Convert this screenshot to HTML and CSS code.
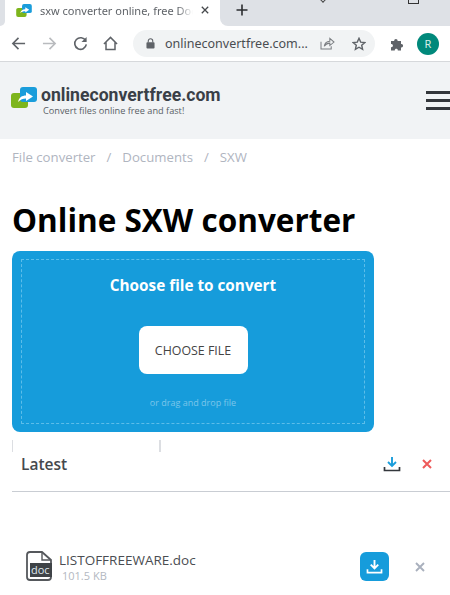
FILE: index.html
```html
<!DOCTYPE html>
<html lang="en">
<head>
    <meta charset="UTF-8">
    <meta name="viewport" content="width=device-width, initial-scale=1.0">
    <title>sxw converter online, free Documents</title>
    <link rel="stylesheet" href="styles.css">
</head>
<body>
    <!-- Browser chrome -->
    <div class="tabbar">
        <div class="tab-edge"></div>
        <div class="tab">
            <svg class="tab-logo" viewBox="0 0 24 20" xmlns="http://www.w3.org/2000/svg">
                <rect x="0" y="6" width="16" height="14" rx="3" fill="#7db51c"/>
                <rect x="9" y="0" width="15" height="14" rx="3" fill="#1a9ddb"/>
                <path d="M6 14 C7 10 10 8 14 8 V5 L20 9 L14 13 V11 C11 11 8 12 6 14Z" fill="#fff"/>
            </svg>
            <span class="tab-title">sxw converter online, free Doc</span>
            <svg class="tab-close" viewBox="0 0 10 10" xmlns="http://www.w3.org/2000/svg">
                <path d="M1 1 L9 9 M9 1 L1 9" stroke="#45484c" stroke-width="1.6"/>
            </svg>
        </div>
        <div class="tab-rest">
            <svg class="tab-new" viewBox="0 0 12 12" xmlns="http://www.w3.org/2000/svg">
                <path d="M6 0.5 V11.5 M0.5 6 H11.5" stroke="#2b2d30" stroke-width="1.6"/>
            </svg>
            <span class="win-chevron"></span>
            <span class="win-box"></span>
        </div>
    </div>

    <div class="toolbar">
        <svg class="tool-icon" viewBox="0 0 16 16" xmlns="http://www.w3.org/2000/svg">
            <path d="M15 8 H2 M8 2 L2 8 L8 14" fill="none" stroke="#5f6368" stroke-width="1.7"/>
        </svg>
        <svg class="tool-icon" viewBox="0 0 16 16" xmlns="http://www.w3.org/2000/svg">
            <path d="M1 8 H14 M8 2 L14 8 L8 14" fill="none" stroke="#b9bbbe" stroke-width="1.7"/>
        </svg>
        <svg class="tool-icon" viewBox="0 0 16 16" xmlns="http://www.w3.org/2000/svg">
            <path d="M13.5 5 A6.2 6.2 0 1 0 14.2 9" fill="none" stroke="#5f6368" stroke-width="1.7"/>
            <path d="M14.5 1 V6.5 H9Z" fill="#5f6368"/>
        </svg>
        <svg class="tool-icon" viewBox="0 0 16 16" xmlns="http://www.w3.org/2000/svg">
            <path d="M1 8.5 L8 1.5 L15 8.5 M3.2 7 V14.5 H12.8 V7" fill="none" stroke="#5f6368" stroke-width="1.6"/>
        </svg>
        <div class="address">
            <svg class="lock" viewBox="0 0 10 12" xmlns="http://www.w3.org/2000/svg">
                <rect x="0.5" y="4.5" width="9" height="7" rx="1" fill="#5f6368"/>
                <path d="M2.5 5 V3.2 A2.5 2.5 0 0 1 7.5 3.2 V5" fill="none" stroke="#5f6368" stroke-width="1.2"/>
            </svg>
            <span class="url">onlineconvertfree.com...</span>
            <svg class="share" viewBox="0 0 16 14" xmlns="http://www.w3.org/2000/svg">
                <path d="M1 5 V13 H12 V10 M4.5 10 C5 6.5 7.5 4.8 10.5 4.6 V1.5 L15 5.5 L10.5 9.2 V6.6 C8 6.6 6 7.8 4.5 10Z" fill="none" stroke="#7b7e82" stroke-width="1.1"/>
            </svg>
            <svg class="star" viewBox="0 0 14 14" xmlns="http://www.w3.org/2000/svg">
                <path d="M7 1.3 L8.7 5.1 L12.8 5.5 L9.7 8.2 L10.6 12.3 L7 10.2 L3.4 12.3 L4.3 8.2 L1.2 5.5 L5.3 5.1Z" fill="none" stroke="#5f6368" stroke-width="1.4"/>
            </svg>
        </div>
        <svg class="puzzle" viewBox="0 0 14 14" xmlns="http://www.w3.org/2000/svg">
            <path d="M1 4 H4.2 C3.8 1.2 8 1.2 7.6 4 H11 V7 C13.8 6.6 13.8 10.8 11 10.4 V13.5 H7.8 C8.2 11 4.4 11 4.8 13.5 H1 V10.2 C3.6 10.6 3.6 6.6 1 7Z" fill="#5f6368"/>
        </svg>
        <div class="avatar">R</div>
    </div>

    <!-- Site header -->
    <header class="site-header">
        <svg class="logo" viewBox="0 0 26 21" xmlns="http://www.w3.org/2000/svg">
            <rect x="0" y="6" width="17" height="15" rx="3" fill="#7db51c"/>
            <rect x="9" y="0" width="17" height="15" rx="3" fill="#1a9ddb"/>
            <path d="M7 15 C8 10.5 11 8.5 15 8.5 V5 L22 9.5 L15 14 V11.5 C12 11.5 9.5 12.5 7 15Z" fill="#fff"/>
        </svg>
        <div class="brand">
            <div class="brand-name">onlineconvertfree.com</div>
            <div class="brand-tag">Convert files online free and fast!</div>
        </div>
        <div class="burger">
            <span></span>
            <span></span>
            <span></span>
        </div>
    </header>

    <nav class="crumbs">
        <span>File converter</span>
        <span>/</span>
        <span>Documents</span>
        <span>/</span>
        <span>SXW</span>
    </nav>

    <h1 class="page-title">Online SXW converter</h1>

    <div class="upload">
        <div class="upload-inner">
            <p class="upload-title">Choose file to convert</p>
            <button class="choose-btn">CHOOSE FILE</button>
            <p class="upload-hint">or drag and drop file</p>
        </div>
    </div>

    <div class="ticks"></div>

    <div class="latest-head">
        <span class="latest-title">Latest</span>
        <svg class="latest-dl" viewBox="0 0 18 16" xmlns="http://www.w3.org/2000/svg">
            <path d="M9 1 V9 M5 6 L9 10 L13 6" fill="none" stroke="#1a9ddb" stroke-width="1.9"/>
            <path d="M1.5 11 V14.5 H16.5 V11" fill="none" stroke="#33373c" stroke-width="1.7"/>
        </svg>
        <svg class="latest-x" viewBox="0 0 10 10" xmlns="http://www.w3.org/2000/svg">
            <path d="M1 1 L9 9 M9 1 L1 9" stroke="#ee5a5a" stroke-width="2"/>
        </svg>
    </div>

    <div class="file-row">
        <div class="file-icon">
            <svg viewBox="0 0 26 30" xmlns="http://www.w3.org/2000/svg">
                <path d="M1 4 Q1 1 4 1 H16 L25 9 V26 Q25 29 22 29 H4 Q1 29 1 26Z" fill="#fff" stroke="#55585c" stroke-width="1.8"/>
                <path d="M16 1 V9 H25" fill="none" stroke="#55585c" stroke-width="1.4"/>
                <rect x="4" y="12" width="22" height="14" fill="#3f4347"/>
            </svg>
            <span class="file-ext">doc</span>
        </div>
        <div class="file-info">
            <div class="file-name">LISTOFFREEWARE.doc</div>
            <div class="file-size">101.5 KB</div>
        </div>
        <button class="file-dl">
            <svg viewBox="0 0 18 16" xmlns="http://www.w3.org/2000/svg">
                <path d="M9 1 V9 M5 6 L9 10 L13 6" fill="none" stroke="#fff" stroke-width="2"/>
                <path d="M1.5 11 V14.5 H16.5 V11" fill="none" stroke="#fff" stroke-width="1.8"/>
            </svg>
        </button>
        <svg class="file-x" viewBox="0 0 10 10" xmlns="http://www.w3.org/2000/svg">
            <path d="M1 1 L9 9 M9 1 L1 9" stroke="#a9b0bd" stroke-width="1.9"/>
        </svg>
    </div>
</body>
</html>
```

FILE: styles.css
```css
html, body {
    height: 595px;
    overflow: hidden;
}

body {
    background-color: #ffffff;
    font-family: 'Open Sans', sans-serif;
    margin: 0;
    padding: 0;
}

/* Browser chrome */
.tabbar {
    height: 26px;
    background-color: #ffffff;
    display: flex;
}

.tab-edge {
    width: 5px;
    background-color: #dee1e6;
    border-radius: 0 0 7px 0;
}

.tab {
    width: 215px;
    background-color: #ffffff;
    display: flex;
    align-items: center;
    padding: 0 0 6px 11px;
    box-sizing: border-box;
}

.tab-logo {
    width: 16px;
    height: 13px;
    margin-right: 8px;
}

.tab-title {
    width: 153px;
    font-family: 'Noto Sans', sans-serif;
    font-size: 11px;
    color: #5f6368;
    white-space: nowrap;
    -webkit-mask-image: linear-gradient(to right, #000 90%, transparent);
    mask-image: linear-gradient(to right, #000 90%, transparent);
}

.tab-close {
    width: 8px;
    height: 8px;
    margin-left: 8px;
}

.tab-rest {
    flex: 1;
    background-color: #dee1e6;
    border-radius: 0 0 0 8px;
    display: flex;
    align-items: flex-start;
    padding: 4px 0 0 16px;
    position: relative;
}

.tab-new {
    width: 12px;
    height: 12px;
}

/* bits of the window buttons, cut off by the top edge */
.win-chevron {
    position: absolute;
    top: -2px;
    left: 101px;
    width: 3px;
    height: 3px;
    border-right: 1px solid #444;
    border-bottom: 1px solid #444;
    transform: rotate(45deg);
}

.win-box {
    position: absolute;
    top: 0;
    left: 188px;
    width: 9px;
    height: 3px;
    border: 1px solid #333;
    border-top: none;
}

.toolbar {
    height: 35px;
    background-color: #ffffff;
    border-bottom: 1px solid #d6d8db;
    display: flex;
    align-items: center;
    padding-left: 11px;
}

.tool-icon {
    width: 15px;
    height: 15px;
    margin-right: 16px;
}

.tool-icon:nth-child(3) {
    margin-right: 15px;
}

.tool-icon:nth-child(4) {
    margin-right: 15px;
}

.address {
    width: 242px;
    height: 27px;
    border-radius: 14px;
    background-color: #f1f3f4;
    display: flex;
    align-items: center;
    padding-left: 13px;
    box-sizing: border-box;
}

.lock {
    width: 9px;
    height: 11px;
    margin-right: 10px;
}

.url {
    width: 144px;
    font-family: 'Noto Sans', sans-serif;
    font-size: 12.5px;
    color: #4a4d51;
    white-space: nowrap;
}

.share {
    width: 15px;
    height: 13px;
    margin-left: 11px;
    margin-right: 17px;
}

.star {
    width: 14px;
    height: 14px;
}

.puzzle {
    width: 14px;
    height: 14px;
    margin-left: 15px;
}

.avatar {
    width: 22px;
    height: 22px;
    border-radius: 50%;
    background-color: #00897b;
    color: #d6efe9;
    font-family: 'Noto Sans', sans-serif;
    font-size: 11px;
    display: flex;
    align-items: center;
    justify-content: center;
    margin-left: 13px;
}

/* Site header */
.site-header {
    height: 77px;
    background-color: #f1f3f5;
    display: flex;
    align-items: center;
    padding-left: 11px;
}

.logo {
    width: 26px;
    height: 21px;
    margin-right: 4px;
    margin-top: -6px;
}

.brand {
    width: 385px;
}

.brand-name {
    font-family: 'Roboto', sans-serif;
    font-weight: 700;
    font-size: 17.6px;
    line-height: 20px;
    color: #3a3f47;
}

.brand-tag {
    font-size: 9.2px;
    line-height: 12px;
    color: #5a5f66;
    margin-left: 2px;
}

.burger {
    width: 24px;
    display: flex;
    flex-direction: column;
    gap: 5px;
}

.burger span {
    display: block;
    height: 3px;
    background-color: #33363b;
}

/* Breadcrumbs */
.crumbs {
    display: flex;
    gap: 11px;
    padding: 9px 12px 0;
    font-size: 13.2px;
    line-height: 18px;
    color: #b0b5bf;
}

.page-title {
    margin: 33px 12px 0;
    font-size: 31.5px;
    line-height: 41px;
    font-weight: 700;
    color: #000000;
}

/* Upload box */
.upload {
    width: 362px;
    height: 181px;
    margin: 11px 0 0 12px;
    padding: 8px 9px;
    box-sizing: border-box;
    background-color: #169cdb;
    border-radius: 8px;
}

.upload-inner {
    height: 100%;
    border: 1px dashed #5cbde9;
    box-sizing: border-box;
    display: flex;
    flex-direction: column;
    align-items: center;
}

.upload-title {
    margin: 14px 0 0;
    font-size: 15.3px;
    line-height: 22px;
    font-weight: 700;
    color: #ffffff;
}

.choose-btn {
    width: 109px;
    height: 48px;
    margin-top: 30px;
    border: none;
    border-radius: 8px;
    background-color: #ffffff;
    font-family: 'Open Sans', sans-serif;
    font-size: 12.4px;
    color: #444444;
}

.upload-hint {
    margin: 23px 0 0;
    font-size: 9px;
    line-height: 12px;
    color: #7cc6ea;
}

.ticks {
    width: 149px;
    height: 12px;
    margin: 8px 0 0 12px;
    border-left: 1px solid #dcdee2;
    border-right: 2px solid #dcdee2;
    box-sizing: border-box;
}

/* Latest list */
.latest-head {
    height: 40px;
    margin-left: 12px;
    padding: 0 0 16px 9px;
    box-sizing: border-box;
    border-bottom: 1px solid #c9cdd3;
    display: flex;
    align-items: center;
}

.latest-title {
    width: 362px;
    font-size: 15.5px;
    font-weight: 600;
    color: #45484d;
}

.latest-dl {
    width: 18px;
    height: 16px;
}

.latest-x {
    width: 10px;
    height: 10px;
    margin-left: 21px;
}

.file-row {
    display: flex;
    align-items: center;
    margin-top: 58px;
    padding-left: 26px;
}

.file-icon {
    position: relative;
    width: 26px;
    height: 30px;
    margin-top: -2px;
}

.file-icon svg {
    display: block;
    width: 26px;
    height: 30px;
}

.file-ext {
    position: absolute;
    left: 5px;
    top: 11px;
    font-size: 11px;
    line-height: 15px;
    color: #dfe8ee;
}

.file-info {
    width: 301px;
    margin-left: 7px;
    margin-top: 2px;
}

.file-name {
    font-size: 13.5px;
    line-height: 17px;
    color: #4a4d52;
}

.file-size {
    font-size: 11px;
    line-height: 14px;
    color: #b3b8c1;
    margin-left: 3px;
}

.file-dl {
    width: 29px;
    height: 29px;
    padding: 0;
    border: none;
    border-radius: 6px;
    background-color: #169cdb;
    display: flex;
    align-items: center;
    justify-content: center;
}

.file-dl svg {
    width: 17px;
    height: 15px;
}

.file-x {
    width: 10px;
    height: 10px;
    margin-left: 26px;
}
```
